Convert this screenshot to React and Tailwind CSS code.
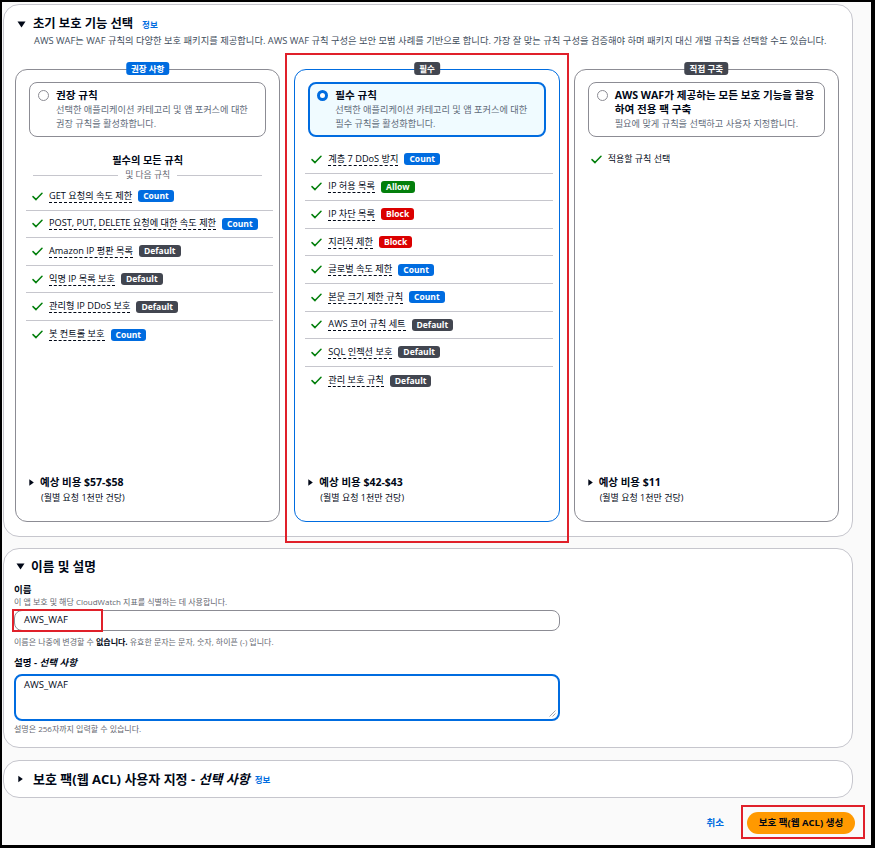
import React from "react";

const FONT = { fontFamily: '"Open Sans","Noto Sans CJK KR",sans-serif' };

function Check() {
  return (
    <svg width="11" height="9" viewBox="0 0 11 9" className="shrink-0">
      <path d="M1 4.6 L4 7.6 L10 1.2" fill="none" stroke="#037f0c" strokeWidth="1.5" strokeLinecap="round" strokeLinejoin="round" />
    </svg>
  );
}

function CaretDown() {
  return (
    <svg width="9" height="7" viewBox="0 0 9 7" className="shrink-0">
      <path d="M0.5 0.5 H8.5 L4.5 6.5 Z" fill="#000716" />
    </svg>
  );
}

function CaretRight({ w = 5, h = 7 }) {
  return (
    <svg width={w} height={h} viewBox="0 0 5 7" className="shrink-0">
      <path d="M0.3 0.3 V6.7 L4.8 3.5 Z" fill="#000716" />
    </svg>
  );
}

const BADGE = {
  Count: "bg-[#006ce0]",
  Allow: "bg-[#037f0c]",
  Block: "bg-[#db0000]",
  Default: "bg-[#424650]",
};

function Badge({ type }) {
  return (
    <span className={`${BADGE[type]} text-white text-[8.5px] font-bold leading-[12px] h-[12px] px-[5px] rounded-[3px] inline-flex items-center`}>
      {type}
    </span>
  );
}

function Rule({ label, badge }) {
  return (
    <div className="flex items-center h-[27.6px] pl-[6px] gap-[6px]">
      <Check />
      <span className="text-[9.2px] leading-[12px] text-[#000716] border-b border-dashed border-[#000716] whitespace-nowrap">{label}</span>
      <Badge type={badge} />
    </div>
  );
}

function Radio({ checked }) {
  return checked ? (
    <span className="w-[11px] h-[11px] rounded-full border-[3.5px] border-[#006ce0] bg-white shrink-0 mt-[2px]" />
  ) : (
    <span className="w-[11px] h-[11px] rounded-full border border-[#8c8c94] bg-white shrink-0 mt-[2px]" />
  );
}

function Cost({ price }) {
  return (
    <div className="pl-[13px] pb-[17px]">
      <div className="flex items-center gap-[6px]">
        <CaretRight />
        <span className="text-[10.5px] font-bold text-[#000716] leading-[14px]">예상 비용 {price}</span>
      </div>
      <div className="pl-[12px] text-[9px] text-[#000716] leading-[13px] mt-[2px]">(월별 요청 1천만 건당)</div>
    </div>
  );
}

function Card({ label, labelBg, selected, children, title, desc, price }) {
  return (
    <div className={`relative flex flex-col h-[453px] rounded-[12px] bg-white border ${selected ? "border-[#006ce0]" : "border-[#8c8c94]"}`}>
      <span className={`absolute left-1/2 -translate-x-1/2 top-[-8px] ${labelBg} text-white text-[8.5px] font-bold leading-[13px] h-[13px] px-[5px] rounded-[3px] whitespace-nowrap`}>
        {label}
      </span>
      <div
        className={`mx-[13px] mt-[12px] h-[55px] rounded-[8px] flex gap-[7px] ${
          selected ? "border-2 border-[#006ce0] bg-[#f0fbff] pl-[7px] pt-[4px]" : "border border-[#8c8c94] pl-[8px] pt-[5px]"
        }`}
      >
        <Radio checked={selected} />
        <div className="whitespace-nowrap">
          <div className="text-[10.6px] font-bold leading-[14px] text-[#000716]">{title}</div>
          <div className="text-[9.2px] leading-[14px] text-[#5f6b7a] mt-[1px]">{desc}</div>
        </div>
      </div>
      <div className="flex-1">{children}</div>
      <Cost price={price} />
    </div>
  );
}

function RuleList({ rules }) {
  return (
    <div className="ml-[10px] mr-[6px] divide-y divide-[#c6c6cd]">
      {rules.map((r) => (
        <Rule key={r[0]} label={r[0]} badge={r[1]} />
      ))}
    </div>
  );
}

const LEFT_RULES = [
  ["GET 요청의 속도 제한", "Count"],
  ["POST, PUT, DELETE 요청에 대한 속도 제한", "Count"],
  ["Amazon IP 평판 목록", "Default"],
  ["익명 IP 목록 보호", "Default"],
  ["관리형 IP DDoS 보호", "Default"],
  ["봇 컨트롤 보호", "Count"],
];

const MID_RULES = [
  ["계층 7 DDoS 방지", "Count"],
  ["IP 허용 목록", "Allow"],
  ["IP 차단 목록", "Block"],
  ["지리적 제한", "Block"],
  ["글로벌 속도 제한", "Count"],
  ["본문 크기 제한 규칙", "Count"],
  ["AWS 코어 규칙 세트", "Default"],
  ["SQL 인젝션 보호", "Default"],
  ["관리 보호 규칙", "Default"],
];

function InfoLink({ cls = "" }) {
  return <span className={`text-[8.5px] font-bold text-[#006ce0] ${cls}`}>정보</span>;
}

export default function App() {
  return (
    <div style={FONT} className="w-[875px] h-[848px] bg-black pt-[2px] pl-[2px] pr-[4px] pb-[3px]">
      <div className="relative w-full h-full bg-[#fafafa] pt-[2px] overflow-hidden">
        {/* Panel 1 */}
        <div className="ml-[1px] w-[850px] bg-white border border-[#c6c6cd] rounded-[16px] pl-[11px] pr-[13px] pb-[14px]">
          <div className="pl-[2px] pt-[10px] flex items-center gap-[7px]">
            <CaretDown />
            <span className="text-[12.3px] font-bold text-[#000716] leading-[18px]">초기 보호 기능 선택</span>
            <InfoLink cls="ml-[2px] mt-[2px]" />
          </div>
          <div className="pl-[19px] text-[9.3px] leading-[14px] text-[#414d5c] mt-[1px] whitespace-nowrap">
            AWS WAF는 WAF 규칙의 다양한 보호 패키지를 제공합니다. AWS WAF 규칙 구성은 보안 모범 사례를 기반으로 합니다. 가장 잘 맞는 규칙 구성을 검증해야 하며 패키지 대신 개별 규칙을 선택할 수도 있습니다.
          </div>
          <div className="grid grid-cols-3 gap-[14px] mt-[21px]">
            <Card
              label="권장 사항"
              labelBg="bg-[#006ce0]"
              title="권장 규칙"
              desc={<>선택한 애플리케이션 카테고리 및 앱 포커스에 대한<br />권장 규칙을 활성화합니다.</>}
              price="$57-$58"
            >
              <div className="text-center text-[10.2px] font-bold text-[#000716] leading-[14px] mt-[16px]">필수의 모든 규칙</div>
              <div className="flex items-center gap-[7px] mx-[17px] mt-[1px] mb-[1px]">
                <div className="flex-1 h-px bg-[#c6c6cd]" />
                <span className="text-[8.8px] text-[#656871] leading-[14px]">및 다음 규칙</span>
                <div className="flex-1 h-px bg-[#c6c6cd]" />
              </div>
              <RuleList rules={LEFT_RULES} />
            </Card>
            <Card
              label="필수"
              labelBg="bg-[#424650]"
              selected
              title="필수 규칙"
              desc={<>선택한 애플리케이션 카테고리 및 앱 포커스에 대한<br />필수 규칙을 활성화합니다.</>}
              price="$42-$43"
            >
              <div className="mt-[9px]">
                <RuleList rules={MID_RULES} />
              </div>
            </Card>
            <Card
              label="직접 구축"
              labelBg="bg-[#424650]"
              title={<>AWS WAF가 제공하는 모든 보호 기능을 활용<br />하여 전용 팩 구축</>}
              desc="필요에 맞게 규칙을 선택하고 사용자 지정합니다."
              price="$11"
            >
              <div className="flex items-center gap-[6px] pl-[16px] mt-[15px]">
                <Check />
                <span className="text-[9px] text-[#000716] leading-[14px]">적용할 규칙 선택</span>
              </div>
            </Card>
          </div>
        </div>

        {/* Panel 2 */}
        <div className="ml-[1px] mt-[11px] w-[850px] h-[200px] bg-white border border-[#c6c6cd] rounded-[16px] pl-[10px] pr-[10px]">
          <div className="flex items-center gap-[6px] pt-[8px] pl-[2px]">
            <CaretDown />
            <span className="text-[12.7px] font-bold text-[#000716] leading-[18px]">이름 및 설명</span>
          </div>
          <div className="mt-[8px] text-[9.5px] font-bold text-[#000716] leading-[13px]">이름</div>
          <div className="text-[8px] text-[#656871] leading-[12px]">이 앱 보호 및 해당 CloudWatch 지표를 식별하는 데 사용합니다.</div>
          <div className="mt-[2px] w-[546px] h-[21px] border border-[#8c8c94] rounded-[8px] flex items-center pl-[9px] text-[9.5px] text-[#000716]">
            AWS_WAF
          </div>
          <div className="mt-[5px] text-[8px] text-[#656871] leading-[12px]">
            이름은 나중에 변경할 수 <span className="font-bold text-[#000716]">없습니다.</span> 유효한 문자는 문자, 숫자, 하이픈 (-) 입니다.
          </div>
          <div className="mt-[8px] text-[9.5px] font-bold text-[#000716] leading-[13px]">
            설명 - <i>선택 사항</i>
          </div>
          <div className="relative mt-[5px] w-[546px] h-[47px] border-2 border-[#006ce0] rounded-[8px] pl-[8px] pt-[2px] text-[9.5px] text-[#000716]">
            AWS_WAF
            <svg width="7" height="7" viewBox="0 0 7 7" className="absolute right-[2px] bottom-[2px]">
              <path d="M6.5 0.5 L0.5 6.5 M6.5 3.5 L3.5 6.5" stroke="#8c8c94" strokeWidth="0.8" />
            </svg>
          </div>
          <div className="mt-[2px] text-[8px] text-[#656871] leading-[12px]">설명은 256자까지 입력할 수 있습니다.</div>
        </div>

        {/* Panel 3 */}
        <div className="ml-[1px] mt-[12px] w-[850px] h-[38px] bg-white border border-[#c6c6cd] rounded-[16px] pl-[14px] flex items-center">
          <CaretRight w={5} h={8} />
          <span className="text-[13px] font-bold text-[#000716] leading-[18px] ml-[10px]">
            보호 팩(웹 ACL) 사용자 지정 - <i>선택 사항</i>
          </span>
          <InfoLink cls="mt-[3px] ml-[5px]" />
        </div>

        {/* Actions */}
        <div className="w-[853px] flex justify-end items-center gap-[23px] mt-[14px]">
          <span className="text-[9.5px] font-bold text-[#006ce0]">취소</span>
          <span className="h-[22px] w-[108px] rounded-full bg-[#ff9900] flex items-center justify-center text-[9.5px] font-bold text-[#000716]">
            보호 팩(웹 ACL) 생성
          </span>
        </div>

        {/* Red annotation boxes */}
        <div className="absolute left-[283px] top-[51px] w-[284px] h-[490px] border-2 border-[#e0202a] pointer-events-none" />
        <div className="absolute left-[10px] top-[607px] w-[91px] h-[23px] border-2 border-[#e0202a] pointer-events-none" />
        <div className="absolute left-[739px] top-[803px] w-[124px] h-[34px] border-2 border-[#e0202a] pointer-events-none" />
      </div>
    </div>
  );
}
